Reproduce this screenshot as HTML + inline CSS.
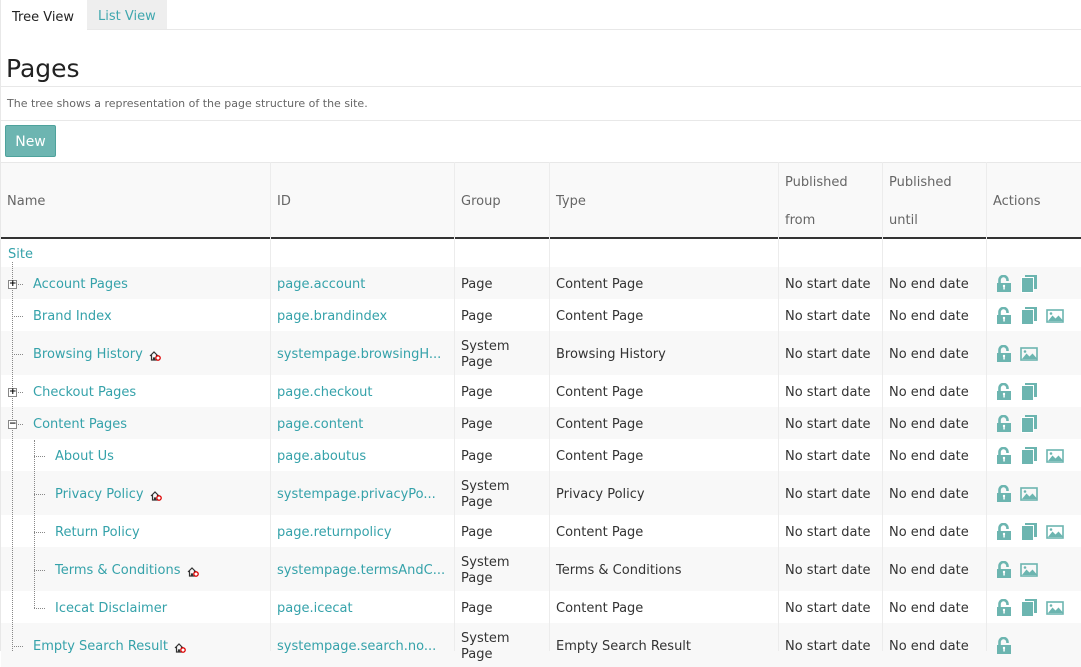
<!DOCTYPE html>
<html><head><meta charset="utf-8"><style>
*{margin:0;padding:0;box-sizing:border-box}
body{width:1081px;height:651px;overflow:hidden;background:#fff;font-family:"DejaVu Sans","Liberation Sans",sans-serif;font-size:13px;color:#333;position:relative}
.a{position:absolute}
.tab1{left:0;top:0;width:87px;height:30px;background:#fff;border-left:1px solid #e5e5e5;padding:10px 0 0 11px;font-size:13px;color:#222}
.tab2{left:87px;top:0;width:80px;height:29px;background:#eee;padding:9px 0 0 11px;color:#3fa7ae}
.hl{height:1px;background:#e8e8e8;left:0;width:1081px}
.lnk{color:#35a2aa}
.row{position:absolute;left:1px;width:1080px}
.g{background:#f8f8f8}
.c{position:absolute;top:0;height:100%;display:flex;align-items:center;line-height:16px;white-space:nowrap;padding-top:3px}
.vl{position:absolute;top:162px;width:1px;height:489px;background:#ececec}
.hd{color:#666}
svg{display:block}
.ic{position:absolute;top:0;height:100%;display:flex;align-items:center;gap:8px;left:995px;padding-top:2px}
.dv{position:absolute;border-left:1px dotted #888}
.dh{position:absolute;border-top:1px dotted #888;height:0}
.box{position:absolute;width:9px;height:9px;border:1px solid #888;background:#fff;font-size:9px;line-height:7px;text-align:center;color:#000;font-weight:bold}
</style></head><body>
<div class="a tab1">Tree View</div>
<div class="a tab2">List View</div>
<div class="a hl" style="top:29px;left:87px;width:994px"></div>
<div class="a" style="left:0;top:0;width:1px;height:651px;background:#e8e8e8"></div>
<div class="a" style="left:6px;top:54px;font-size:25px;color:#222">Pages</div>
<div class="a hl" style="top:86px"></div>
<div class="a" style="left:7px;top:97px;font-size:11px;color:#666">The tree shows a representation of the page structure of the site.</div>
<div class="a hl" style="top:120px"></div>
<div class="a" style="left:5px;top:125px;width:51px;height:32px;background:#6db5b1;border:1px solid #4ea29c;border-radius:2px;color:#fff;font-size:14px;text-align:center;line-height:32px">New</div>

<div class="row" style="top:162px;height:77px;background:#f9f9f9;border-top:1px solid #e8e8e8;border-bottom:2px solid #333">
<div class="c hd" style="left:6px">Name</div>
<div class="c hd" style="left:276px">ID</div>
<div class="c hd" style="left:460px">Group</div>
<div class="c hd" style="left:555px">Type</div>
<div class="c hd" style="left:784px;line-height:38px">Published<br>from</div>
<div class="c hd" style="left:888px;line-height:38px">Published<br>until</div>
<div class="c hd" style="left:992px">Actions</div>
</div>

<svg width="0" height="0" style="position:absolute"><defs>
<g id="lk"><path d="M3.5 8V5a4 4 0 0 1 8 0v1" fill="none" stroke="#6cb5b0" stroke-width="2.6"/><rect x="1" y="8" width="14" height="9" fill="#6cb5b0"/><rect x="7.3" y="10.5" width="1.5" height="4" fill="#fff"/><circle cx="8" cy="11" r="1.2" fill="#fff"/></g>
<g id="cp"><rect x="5" y="0" width="12" height="14" fill="#6cb5b0"/><rect x="1" y="2" width="13" height="16" fill="#fff"/><rect x="2" y="3" width="11" height="14" fill="#6cb5b0"/></g>
<g id="im"><rect x="1" y="3" width="16" height="12" fill="none" stroke="#6cb5b0" stroke-width="1.6"/><path d="M2 14L6.5 8.5l3 3 3-3 4 4.5v1z" fill="#6cb5b0"/><circle cx="5" cy="6.5" r="1.3" fill="#6cb5b0"/></g>
<g id="hs"><path d="M1 5L5 1l4 4M2.5 4v5h2V7h1v2h2V4" fill="none" stroke="#333" stroke-width="1.2"/><circle cx="9" cy="7" r="2.2" fill="#fff" stroke="#d00" stroke-width="1.3"/></g>
</defs></svg>

<div class="row" style="top:239px;height:28px"><div class="c lnk" style="left:7px">Site</div></div>

<div class="row g" style="top:267px;height:32px"><div class="c lnk" style="left:32px">Account Pages</div><div class="c lnk" style="left:276px">page.account</div><div class="c" style="left:460px">Page</div><div class="c" style="left:555px">Content Page</div><div class="c" style="left:784px">No start date</div><div class="c" style="left:888px">No end date</div><div class="ic"><svg width="16" height="18"><use href="#lk"/></svg><svg width="18" height="18"><use href="#cp"/></svg></div></div>
<div class="row" style="top:299px;height:32px"><div class="c lnk" style="left:32px">Brand Index</div><div class="c lnk" style="left:276px">page.brandindex</div><div class="c" style="left:460px">Page</div><div class="c" style="left:555px">Content Page</div><div class="c" style="left:784px">No start date</div><div class="c" style="left:888px">No end date</div><div class="ic"><svg width="16" height="18"><use href="#lk"/></svg><svg width="18" height="18"><use href="#cp"/></svg><svg width="18" height="18"><use href="#im"/></svg></div></div>
<div class="row g" style="top:331px;height:44px"><div class="c lnk" style="left:32px">Browsing History<svg width="12" height="11" style="margin-left:6px;margin-top:4px"><use href="#hs"/></svg></div><div class="c lnk" style="left:276px">systempage.browsingH...</div><div class="c" style="left:460px">System<br>Page</div><div class="c" style="left:555px">Browsing History</div><div class="c" style="left:784px">No start date</div><div class="c" style="left:888px">No end date</div><div class="ic"><svg width="16" height="18"><use href="#lk"/></svg><svg width="18" height="18"><use href="#im"/></svg></div></div>
<div class="row" style="top:375px;height:32px"><div class="c lnk" style="left:32px">Checkout Pages</div><div class="c lnk" style="left:276px">page.checkout</div><div class="c" style="left:460px">Page</div><div class="c" style="left:555px">Content Page</div><div class="c" style="left:784px">No start date</div><div class="c" style="left:888px">No end date</div><div class="ic"><svg width="16" height="18"><use href="#lk"/></svg><svg width="18" height="18"><use href="#cp"/></svg></div></div>
<div class="row g" style="top:407px;height:32px"><div class="c lnk" style="left:32px">Content Pages</div><div class="c lnk" style="left:276px">page.content</div><div class="c" style="left:460px">Page</div><div class="c" style="left:555px">Content Page</div><div class="c" style="left:784px">No start date</div><div class="c" style="left:888px">No end date</div><div class="ic"><svg width="16" height="18"><use href="#lk"/></svg><svg width="18" height="18"><use href="#cp"/></svg></div></div>
<div class="row" style="top:439px;height:32px"><div class="c lnk" style="left:54px">About Us</div><div class="c lnk" style="left:276px">page.aboutus</div><div class="c" style="left:460px">Page</div><div class="c" style="left:555px">Content Page</div><div class="c" style="left:784px">No start date</div><div class="c" style="left:888px">No end date</div><div class="ic"><svg width="16" height="18"><use href="#lk"/></svg><svg width="18" height="18"><use href="#cp"/></svg><svg width="18" height="18"><use href="#im"/></svg></div></div>
<div class="row g" style="top:471px;height:44px"><div class="c lnk" style="left:54px">Privacy Policy<svg width="12" height="11" style="margin-left:6px;margin-top:4px"><use href="#hs"/></svg></div><div class="c lnk" style="left:276px">systempage.privacyPo...</div><div class="c" style="left:460px">System<br>Page</div><div class="c" style="left:555px">Privacy Policy</div><div class="c" style="left:784px">No start date</div><div class="c" style="left:888px">No end date</div><div class="ic"><svg width="16" height="18"><use href="#lk"/></svg><svg width="18" height="18"><use href="#im"/></svg></div></div>
<div class="row" style="top:515px;height:32px"><div class="c lnk" style="left:54px">Return Policy</div><div class="c lnk" style="left:276px">page.returnpolicy</div><div class="c" style="left:460px">Page</div><div class="c" style="left:555px">Content Page</div><div class="c" style="left:784px">No start date</div><div class="c" style="left:888px">No end date</div><div class="ic"><svg width="16" height="18"><use href="#lk"/></svg><svg width="18" height="18"><use href="#cp"/></svg><svg width="18" height="18"><use href="#im"/></svg></div></div>
<div class="row g" style="top:547px;height:44px"><div class="c lnk" style="left:54px">Terms &amp; Conditions<svg width="12" height="11" style="margin-left:6px;margin-top:4px"><use href="#hs"/></svg></div><div class="c lnk" style="left:276px">systempage.termsAndC...</div><div class="c" style="left:460px">System<br>Page</div><div class="c" style="left:555px">Terms &amp; Conditions</div><div class="c" style="left:784px">No start date</div><div class="c" style="left:888px">No end date</div><div class="ic"><svg width="16" height="18"><use href="#lk"/></svg><svg width="18" height="18"><use href="#im"/></svg></div></div>
<div class="row" style="top:591px;height:32px"><div class="c lnk" style="left:54px">Icecat Disclaimer</div><div class="c lnk" style="left:276px">page.icecat</div><div class="c" style="left:460px">Page</div><div class="c" style="left:555px">Content Page</div><div class="c" style="left:784px">No start date</div><div class="c" style="left:888px">No end date</div><div class="ic"><svg width="16" height="18"><use href="#lk"/></svg><svg width="18" height="18"><use href="#cp"/></svg><svg width="18" height="18"><use href="#im"/></svg></div></div>
<div class="row g" style="top:623px;height:44px"><div class="c lnk" style="left:32px">Empty Search Result<svg width="12" height="11" style="margin-left:6px;margin-top:4px"><use href="#hs"/></svg></div><div class="c lnk" style="left:276px">systempage.search.no...</div><div class="c" style="left:460px">System<br>Page</div><div class="c" style="left:555px">Empty Search Result</div><div class="c" style="left:784px">No start date</div><div class="c" style="left:888px">No end date</div><div class="ic"><svg width="16" height="18"><use href="#lk"/></svg></div></div>

<div class="vl" style="left:270px"></div>
<div class="vl" style="left:454px"></div>
<div class="vl" style="left:549px"></div>
<div class="vl" style="left:778px"></div>
<div class="vl" style="left:882px"></div>
<div class="vl" style="left:986px"></div>

<div class="dv" style="left:12px;top:262px;height:389px"></div>
<div class="dh" style="left:12px;top:284px;width:11px"></div>
<div class="dh" style="left:12px;top:316px;width:11px"></div>
<div class="dh" style="left:12px;top:354px;width:11px"></div>
<div class="dh" style="left:12px;top:392px;width:11px"></div>
<div class="dh" style="left:12px;top:424px;width:11px"></div>
<div class="dh" style="left:12px;top:646px;width:11px"></div>
<div class="box" style="left:8px;top:280px">+</div>
<div class="box" style="left:8px;top:388px">+</div>
<div class="box" style="left:8px;top:420px">−</div>
<div class="dv" style="left:34px;top:440px;height:168px"></div>
<div class="dh" style="left:34px;top:456px;width:11px"></div>
<div class="dh" style="left:34px;top:494px;width:11px"></div>
<div class="dh" style="left:34px;top:532px;width:11px"></div>
<div class="dh" style="left:34px;top:570px;width:11px"></div>
<div class="dh" style="left:34px;top:608px;width:11px"></div>
</body></html>
